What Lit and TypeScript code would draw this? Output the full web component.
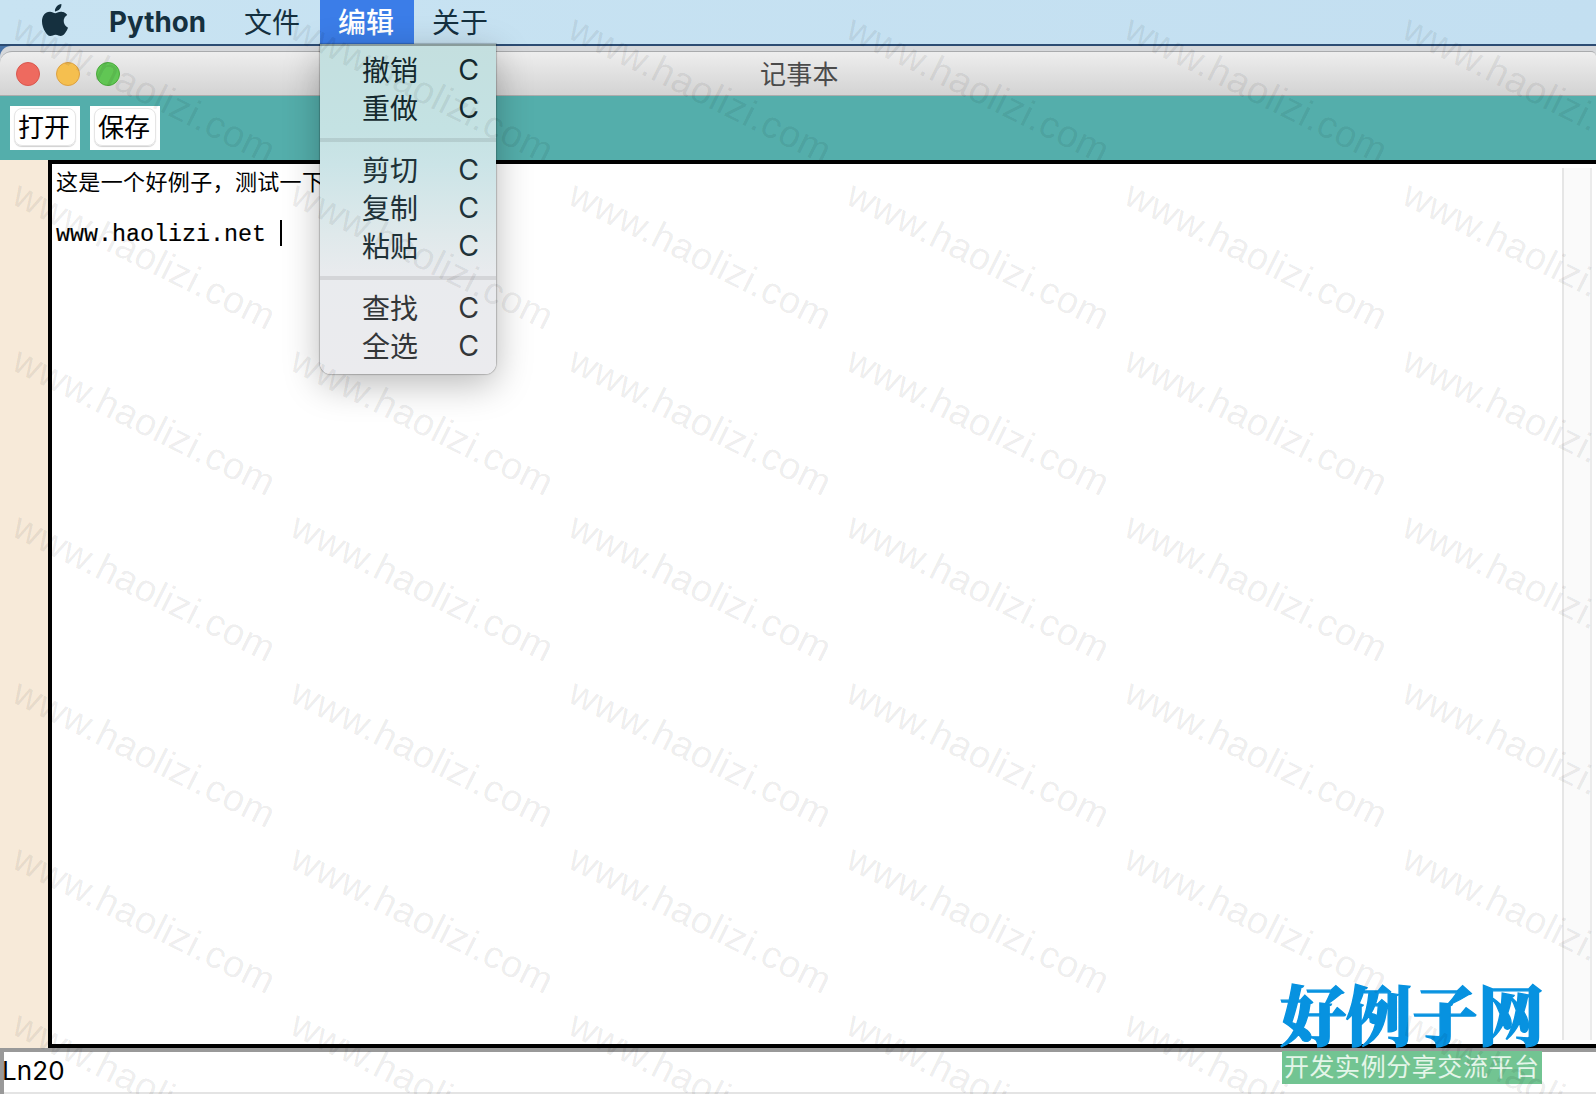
import { LitElement, html, css, svg } from "lit";
import { customElement } from "lit/decorators.js";

const MENU_GROUPS = [["撤销", "重做"], ["剪切", "复制", "粘贴"], ["查找", "全选"]];
const MARK_COLS = [10, 288, 566, 844, 1122, 1400];
const MARK_ROWS = [37, 203, 369, 535, 701, 867, 1033];

@customElement("app-root")
export class AppRoot extends LitElement {
  static styles = css`
    * { box-sizing: border-box; }
    :host {
      display: flex; flex-direction: column; position: relative;
      width: 1596px; height: 1094px; overflow: hidden; background: #fff;
      font-family: Inter, "Noto Sans CJK SC", sans-serif; color: #000;
    }
    .menubar {
      display: flex; flex: none; height: 44px; line-height: 42px; font-size: 28px;
      color: #15303f; background: linear-gradient(90deg, #c8e3f2, #c3dff1);
      white-space: nowrap;
    }
    .apple { flex: none; width: 32px; height: 32px; margin: 4px 0 0 39px; fill: #15303f; }
    .app { width: 98px; margin-left: 38px; }
    .menu { padding: 0 19px; }
    .menu span { font-family: "Noto Sans CJK SC", sans-serif; }
    .file { padding: 0 20px 0 37px; }
    .menu.open { background: #3b7de8; color: #fff; font-weight: 500; position: relative; padding: 0 20px 0 18px; }
    .menu.about { padding-left: 18px; }
    .drop {
      position: absolute; z-index: 3; left: 0; top: 44px; width: 176px; height: 330px;
      padding-top: 7px; font-weight: 400; color: #14292e;
      border-radius: 0 0 11px 11px;
      background: linear-gradient(#c4dfdf 0, #c4e2e3 85px, #cbe4e7 120px, #dfe9eb 190px, #e9ebee 230px, #ebebee 100%);
      box-shadow: 0 0 1px 1px rgba(0,0,0,.2), 0 10px 36px rgba(0,0,0,.28), inset 0 2px 0 rgba(0,0,0,.3);
    }
    .entry { display: flex; height: 38px; line-height: 36px; padding: 0 17px 0 42px; justify-content: space-between; }
    .key { font-weight: 400; font-size: 28.5px; line-height: 38px; }
    .late { color: #333638; }
    .mid { color: #203238; }
    .rule { height: 4px; margin: 11px 0 9px; background: rgba(0,0,0,.09); }
    .behind {
      flex: none; height: 52px; margin-bottom: -44px; border-top: 2px solid #2c4c73;
      background: linear-gradient(90deg, #4773a8, #35506e);
    }
    .shade { height: 20px; background: #d6d8db; border-radius: 11px 0 0 0; }
    .title {
      display: flex; position: relative; flex: none; height: 45px; align-items: center;
      background: linear-gradient(#eeeeee, #d3d3d3); border-top: 1px solid #a9abad;
      border-bottom: 1px solid #acacac; border-radius: 12px 5px 0 0; margin-top: -1px; padding-left: 16px;
    }
    .light { width: 24px; height: 24px; margin-right: 16px; border-radius: 50%; border: 1px solid #d9574e; background: #ee6a5f; }
    .amber { border-color: #dca143; background: #f5bf4f; }
    .green { border-color: #4aa93c; background: #61c654; }
    .name { margin-left: 624px; font: 26px/40px "Noto Sans CJK SC", sans-serif; height: 42px; color: #4b4b4b; letter-spacing: .3px; }
    .tools { display: flex; flex: none; height: 64px; gap: 10px; padding: 10px; background: #54aeab; }
    .tool { width: 70px; height: 44px; padding: 2px 4px 4px; background: #fff; }
    .face {
      height: 38px; border-radius: 8px; border: 1px solid #e5e5e5; box-shadow: 0 1px 1px #d0d0d0; padding-right: 2px;
      font: 26px/34px "Noto Sans CJK SC", sans-serif; text-align: center; white-space: nowrap;
    }
    .body { display: flex; flex: none; height: 888px; }
    .gutter { width: 48px; background: #f7ead9; }
    .editor { display: flex; flex: 1; border: 4px solid #000; border-right: 0; padding: 4px 0 4px 4px; }
    .text { flex: 1; line-height: 26px; font-size: 23.33px; white-space: pre; }
    .line { height: 26px; display: flex; }
    .zh { font: 22px/24px "Noto Sans CJK SC", sans-serif; letter-spacing: .36px; }
    .mono { font-family: "Liberation Mono", monospace; -webkit-text-stroke: .15px #000; line-height: 30px; }
    .caret { width: 2px; height: 26px; margin-left: 14px; background: #000; }
    .scroll { width: 30px; margin-right: 4px; background: #fafafa; border-left: 2px solid #e6e6e6; border-right: 2px solid #ebebeb; }
    .status {
      flex: none; height: 46px; border: solid #999; border-width: 4px 0 0 4px;
      box-shadow: inset 0 -2px 0 #e4e4e4; font-size: 26px; line-height: 37px;
    }
    .ln { margin-left: -2px; letter-spacing: .1px; }
    .overlay { position: absolute; inset: 0; z-index: 5; pointer-events: none; }
    .mark { font: 38px "Liberation Sans", sans-serif; fill: #000; fill-opacity: .08; }
    .brand { font: 900 65px "Noto Serif CJK SC", "Noto Sans CJK SC", serif; fill: #0792e0; stroke: #0792e0; stroke-width: 1.3px; }
    .tag { font: 25px "Noto Sans CJK SC", sans-serif; fill: #e4f5e9; }
    .tagbg { fill: #72c492; }
  `;

  render() {
    return html`
      <div class="menubar">
        <svg class="apple" viewBox="0 0 24 24"><path d="M12.152 6.896c-.948 0-2.415-1.078-3.96-1.04-2.04.027-3.91 1.183-4.961 3.014-2.117 3.675-.546 9.103 1.519 12.09 1.013 1.454 2.208 3.09 3.792 3.039 1.52-.065 2.09-.987 3.935-.987 1.831 0 2.35.987 3.96.948 1.637-.026 2.676-1.48 3.676-2.948 1.156-1.688 1.636-3.325 1.662-3.415-.039-.013-3.182-1.221-3.22-4.857-.026-3.04 2.48-4.494 2.597-4.559-1.429-2.09-3.623-2.324-4.39-2.376-2-.156-3.675 1.09-4.61 1.09zM15.53 3.83c.843-1.012 1.4-2.427 1.245-3.83-1.207.052-2.662.805-3.532 1.818-.78.896-1.454 2.338-1.273 3.714 1.338.104 2.715-.688 3.559-1.701"/></svg>
        <svg class="app" height="44"><text x="0" y="32" font-size="28" font-weight="700" fill="#15303f" textLength="97" lengthAdjust="spacingAndGlyphs">Python</text></svg>
        <div class="menu file"><span>文件</span></div>
        <div class="menu open"><span>编辑</span>
          <div class="drop">
            ${MENU_GROUPS.map((group, i) => html`
              ${i ? html`<div class="rule"></div>` : ""}
              ${group.map((label) => html`<div class="entry ${["", "mid", "late"][i]}"><span>${label}</span><b class="key">C</b></div>`)}
            `)}
          </div>
        </div>
        <div class="menu about"><span>关于</span></div>
      </div>
      <div class="behind"><div class="shade"></div></div>
      <div class="title">
        <i class="light"></i><i class="light amber"></i><i class="light green"></i>
        <div class="name">记事本</div>
      </div>
      <div class="tools">
        <div class="tool"><div class="face">打开</div></div>
        <div class="tool"><div class="face">保存</div></div>
      </div>
      <div class="body">
        <div class="gutter"></div>
        <div class="editor">
          <div class="text"><div class="line zh">这是一个好例子，测试一下</div><div class="line"></div><div class="line"><span class="mono">www.haolizi.net</span><i class="caret"></i></div></div>
          <div class="scroll"></div>
        </div>
      </div>
      <div class="status"><div class="ln">Ln20</div></div>
      <svg class="overlay" width="1596" height="1094">
        <text class="brand" x="1280" y="1040" textLength="264" lengthAdjust="spacingAndGlyphs">好例子网</text>
        <rect class="tagbg" x="1282" y="1051" width="260" height="33"/>
        <text class="tag" x="1284" y="1076" textLength="255">开发实例分享交流平台</text>
        ${MARK_ROWS.map((y) => MARK_COLS.map((x) => svg`<text class="mark" transform="translate(${x} ${y}) rotate(26.4)" textLength="287">www.haolizi.com</text>`))}
      </svg>
    `;
  }
}
